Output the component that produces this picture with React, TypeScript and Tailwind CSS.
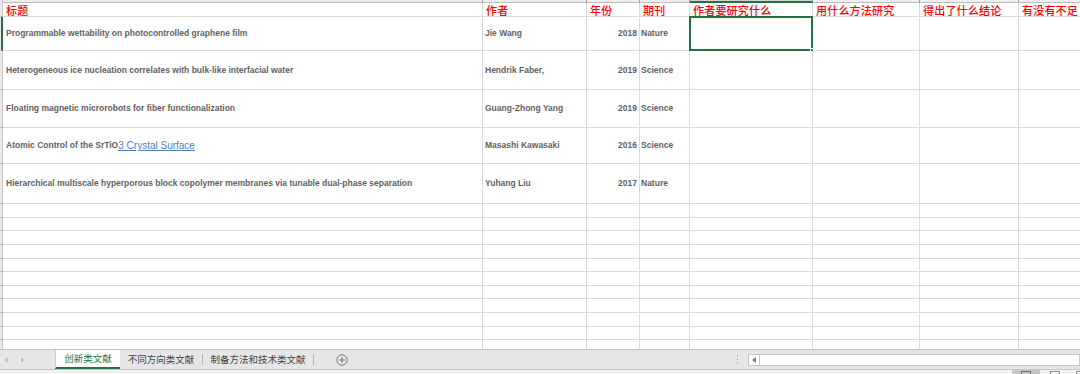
import React from "react";

const cols = [
  { key: "a", w: "w-[480px]" },
  { key: "b", w: "w-[104px]" },
  { key: "c", w: "w-[53px]" },
  { key: "d", w: "w-[50px]" },
  { key: "e", w: "w-[123px]" },
  { key: "f", w: "w-[107px]" },
  { key: "g", w: "w-[99px]" },
  { key: "h", w: "w-[80px]" },
];

const headers = ["标题", "作者", "年份", "期刊", "作者要研究什么", "用什么方法研究", "得出了什么结论", "有没有不足"];

type Paper = { title: React.ReactNode; author: string; year: string; journal: string; h: string };

const papers: Paper[] = [
  { title: "Programmable wettability on photocontrolled graphene film", author: "Jie Wang", year: "2018", journal: "Nature", h: "h-[34px]" },
  { title: "Heterogeneous ice nucleation correlates with bulk-like interfacial water", author: "Hendrik Faber,", year: "2019", journal: "Science", h: "h-[39px]" },
  { title: "Floating magnetic microrobots for fiber functionalization", author: "Guang-Zhong Yang", year: "2019", journal: "Science", h: "h-[38px]" },
  {
    title: (
      <>
        Atomic Control of the SrTiO
        <span className="font-normal text-[10px] text-[#4f7fc9] underline">3 Crystal Surface</span>
      </>
    ),
    author: "Masashi Kawasaki",
    year: "2016",
    journal: "Science",
    h: "h-[36px]",
  },
  { title: "Hierarchical multiscale hyperporous block copolymer membranes via tunable dual-phase separation", author: "Yuhang Liu", year: "2017", journal: "Nature", h: "h-[40px]" },
];

const emptyRows = ["h-[14px]", "h-[13px]", "h-[14px]", "h-[14px]", "h-[13px]", "h-[14px]", "h-[13px]", "h-[14px]", "h-[14px]", "h-[13px]", "h-[14px]"];

const cellBase = "border-r border-b border-[#dadada] shrink-0 flex items-center overflow-hidden whitespace-nowrap";
const dataText = "text-[8.5px] font-bold text-[#626262]";

function RowHead({ h, active }: { h: string; active?: boolean }) {
  return (
    <div
      className={`${h} w-[3px] shrink-0 bg-[#e9e9e9] border-b border-[#b8b8b8] ${
        active ? "border-r-2 border-r-[#217346]" : "border-r border-r-[#c8c8c8]"
      }`}
    />
  );
}

function Sheet() {
  return (
    <div className="flex-1 overflow-hidden bg-white">
      {/* column header strip, mostly cut off */}
      <div className="flex h-[3px]">
        <div className="w-[3px] shrink-0 bg-[#e9e9e9] border-r border-[#c8c8c8]" />
        {cols.map((c) => (
          <div
            key={c.key}
            className={`${c.w} shrink-0 border-r border-[#9a9a9a] ${
              c.key === "e" ? "bg-[#d2d2d2] border-b-2 border-b-[#217346]" : "bg-[#efefef] border-b border-b-[#bdbdbd]"
            }`}
          />
        ))}
      </div>

      {/* header row */}
      <div className="flex h-[14px]">
        <RowHead h="h-[14px]" />
        {headers.map((t, i) => (
          <div key={t} className={`${cols[i].w} ${cellBase} pl-[3px] pt-[1px]`}>
            <span className="text-[11px] leading-none font-medium text-[#ff0000] font-['Noto_Sans_CJK_SC',sans-serif] tracking-[0.2px]">
              {t}
            </span>
          </div>
        ))}
      </div>

      {/* data rows */}
      {papers.map((p, r) => (
        <div key={r} className={`flex ${p.h} font-['Liberation_Sans',Arial,sans-serif]`}>
          <RowHead h={p.h} active={r === 0} />
          <div className={`${cols[0].w} ${cellBase} pl-[3px] ${dataText}`}>{p.title}</div>
          <div className={`${cols[1].w} ${cellBase} pl-[2px] ${dataText}`}>{p.author}</div>
          <div className={`${cols[2].w} ${cellBase} justify-end pr-[2px] ${dataText}`}>{p.year}</div>
          <div className={`${cols[3].w} ${cellBase} pl-[1px] ${dataText}`}>{p.journal}</div>
          <div className={`${cols[4].w} ${cellBase} relative overflow-visible`}>
            {r === 0 && (
              <div className="absolute -left-[1px] -top-[1px] w-[124px] h-[35px] border-2 border-[#217346]">
                <div className="absolute -right-[3px] -bottom-[3px] w-[4px] h-[4px] bg-[#217346] border border-white" />
              </div>
            )}
          </div>
          <div className={`${cols[5].w} ${cellBase}`} />
          <div className={`${cols[6].w} ${cellBase}`} />
          <div className={`${cols[7].w} ${cellBase}`} />
        </div>
      ))}

      {/* empty rows */}
      {emptyRows.map((h, r) => (
        <div key={`e${r}`} className={`flex ${h}`}>
          <RowHead h={h} />
          {cols.map((c) => (
            <div key={c.key} className={`${c.w} ${cellBase}`} />
          ))}
        </div>
      ))}
    </div>
  );
}

function TabBar() {
  return (
    <div className="h-[20px] flex items-stretch bg-[#e6e6e6] border-t border-[#c4c4c4] font-['Noto_Sans_CJK_SC',sans-serif] text-[9.5px]">
      <div className="w-[55px] flex items-center pl-[4px] gap-[13px]">
        <svg width="4" height="6" viewBox="0 0 4 6">
          <path d="M4 0 L0 3 L4 6 Z" fill="#c2c2c2" />
        </svg>
        <svg width="4" height="6" viewBox="0 0 4 6">
          <path d="M0 0 L4 3 L0 6 Z" fill="#c2c2c2" />
        </svg>
      </div>
      <div className="w-[65px] bg-white flex items-center justify-center text-[#217346] border-b-2 border-[#217346] border-l border-l-[#cfcfcf]">
        创新类文献
      </div>
      <div className="w-[82px] flex items-center justify-center text-[#444]">不同方向类文献</div>
      <div className="my-[4px] w-px bg-[#b5b5b5]" />
      <div className="w-[110px] flex items-center justify-center text-[#444]">制备方法和技术类文献</div>
      <div className="my-[4px] w-px bg-[#b5b5b5]" />
      <div className="w-[22px]" />
      <div className="flex items-center">
        <svg width="12" height="12" viewBox="0 0 12 12">
          <circle cx="6" cy="6" r="5.2" fill="none" stroke="#7a7a7a" strokeWidth="1" />
          <path d="M6 3.2 V8.8 M3.2 6 H8.8" stroke="#7a7a7a" strokeWidth="1.2" />
        </svg>
      </div>
      <div className="flex-1" />
      <div className="flex items-center pr-[9px]">
        <svg width="2" height="9" viewBox="0 0 2 9">
          <rect x="0" y="0" width="1" height="1.5" fill="#a8a8a8" />
          <rect x="0" y="3.5" width="1" height="1.5" fill="#a8a8a8" />
          <rect x="0" y="7" width="1" height="1.5" fill="#a8a8a8" />
        </svg>
      </div>
      <div className="w-[332px] flex items-center">
        <div className="h-[12px] w-full flex bg-white border border-[#c8c8c8]">
          <div className="w-[11px] flex items-center justify-center border-r border-[#c8c8c8]">
            <svg width="4" height="6" viewBox="0 0 4 6">
              <path d="M4 0 L0 3 L4 6 Z" fill="#777" />
            </svg>
          </div>
        </div>
      </div>
    </div>
  );
}

function StatusBar() {
  return (
    <div className="h-[5px] flex bg-[#f3f3f3] border-t border-[#c8c8c8] overflow-hidden">
      <div className="flex-1" />
      <div className="w-[28px] bg-[#c6c6c6] flex justify-center pt-[1px]">
        <div className="w-[10px] h-[4px] border border-[#6d6d6d] border-b-0" />
      </div>
      <div className="w-[10px]" />
      <div className="w-[10px] h-[4px] mt-[1px] border border-[#8a8a8a] border-b-0" />
      <div className="w-[16px]" />
      <div className="w-[4px] h-[4px] mt-[1px] border-l border-t border-[#8a8a8a]" />
    </div>
  );
}

export default function App() {
  return (
    <div className="w-[1080px] h-[374px] flex flex-col overflow-hidden bg-white">
      <Sheet />
      <TabBar />
      <StatusBar />
    </div>
  );
}
